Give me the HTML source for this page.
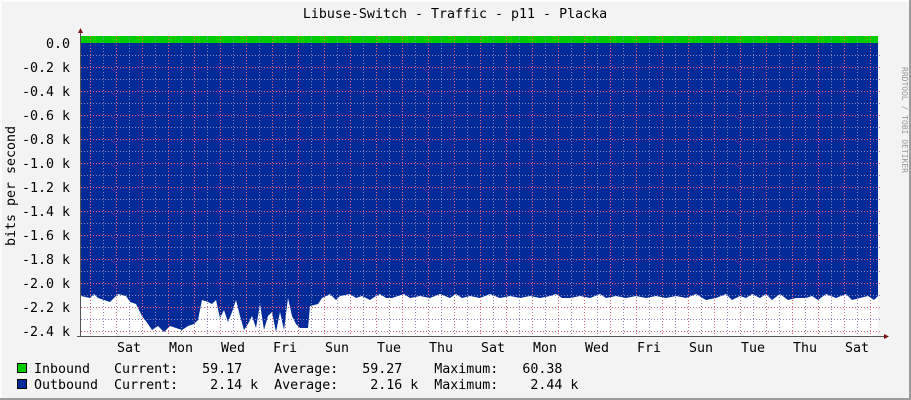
<!DOCTYPE html>
<html><head><meta charset="utf-8"><style>
html,body{margin:0;padding:0;background:#f3f3f3}
svg{display:block}
text{font-family:"DejaVu Sans Mono","Liberation Mono",monospace;font-size:13.3px;fill:#000}
</style></head><body>
<svg width="911" height="400" xmlns="http://www.w3.org/2000/svg">
<rect x="0" y="0" width="911" height="400" fill="#f3f3f3"/>
<rect x="0" y="0" width="911" height="2" fill="#fcfcfc"/>
<rect x="0" y="0" width="2" height="400" fill="#fcfcfc"/>
<rect x="909" y="0" width="2" height="400" fill="#9c9c9c"/>
<rect x="0" y="398" width="911" height="2" fill="#9c9c9c"/>
<rect x="81" y="36" width="797" height="300" fill="#ffffff"/>
<rect x="81" y="36" width="797" height="7" fill="#00cc00"/>
<rect x="81" y="43" width="797" height="250" fill="#002a97"/>
<polygon fill="#002a97" points="81,296 90,298 94,294 98,298 104,300 110,302 114,298 118,294 126,296 130,302 136,304 142,316 148,324 152,330 158,326 164,332 170,326 176,328 182,330 188,326 194,324 198,320 202,300 208,302 212,304 216,300 220,318 224,310 228,322 232,312 236,300 240,316 244,330 248,324 252,316 256,328 260,304 264,330 268,316 272,312 276,332 280,312 284,330 288,298 292,316 296,324 300,328 308,328 310,306 318,304 322,298 330,294 336,300 340,296 350,294 356,298 362,296 370,300 376,296 380,294 386,298 392,298 398,296 404,294 410,298 420,296 430,298 440,294 450,298 456,294 462,298 470,296 480,298 490,294 500,298 510,296 520,298 530,296 540,298 550,296 556,294 562,298 570,298 580,296 590,298 600,294 606,298 616,296 626,298 636,296 646,298 656,296 666,298 676,296 686,298 696,294 706,300 716,298 726,294 732,300 740,296 746,298 752,294 760,298 766,294 772,300 780,294 788,300 796,298 806,298 812,296 818,300 826,294 836,298 846,294 852,300 860,298 868,296 874,300 878,296 878,43 81,43"/>
<g stroke="#d86878" stroke-width="1" stroke-dasharray="1,2">
<line x1="81" y1="67.5" x2="880" y2="67.5"/><line x1="81" y1="91.5" x2="880" y2="91.5"/><line x1="81" y1="115.5" x2="880" y2="115.5"/><line x1="81" y1="139.5" x2="880" y2="139.5"/><line x1="81" y1="163.5" x2="880" y2="163.5"/><line x1="81" y1="187.5" x2="880" y2="187.5"/><line x1="81" y1="211.5" x2="880" y2="211.5"/><line x1="81" y1="235.5" x2="880" y2="235.5"/><line x1="81" y1="259.5" x2="880" y2="259.5"/><line x1="81" y1="283.5" x2="880" y2="283.5"/><line x1="81" y1="307.5" x2="880" y2="307.5"/><line x1="81" y1="331.5" x2="880" y2="331.5"/>
<line x1="90.5" y1="36" x2="90.5" y2="336"/><line x1="116.5" y1="36" x2="116.5" y2="336"/><line x1="142.5" y1="36" x2="142.5" y2="336"/><line x1="168.5" y1="36" x2="168.5" y2="336"/><line x1="194.5" y1="36" x2="194.5" y2="336"/><line x1="220.5" y1="36" x2="220.5" y2="336"/><line x1="246.5" y1="36" x2="246.5" y2="336"/><line x1="272.5" y1="36" x2="272.5" y2="336"/><line x1="298.5" y1="36" x2="298.5" y2="336"/><line x1="324.5" y1="36" x2="324.5" y2="336"/><line x1="350.5" y1="36" x2="350.5" y2="336"/><line x1="376.5" y1="36" x2="376.5" y2="336"/><line x1="402.5" y1="36" x2="402.5" y2="336"/><line x1="428.5" y1="36" x2="428.5" y2="336"/><line x1="454.5" y1="36" x2="454.5" y2="336"/><line x1="480.5" y1="36" x2="480.5" y2="336"/><line x1="506.5" y1="36" x2="506.5" y2="336"/><line x1="532.5" y1="36" x2="532.5" y2="336"/><line x1="558.5" y1="36" x2="558.5" y2="336"/><line x1="584.5" y1="36" x2="584.5" y2="336"/><line x1="610.5" y1="36" x2="610.5" y2="336"/><line x1="636.5" y1="36" x2="636.5" y2="336"/><line x1="662.5" y1="36" x2="662.5" y2="336"/><line x1="688.5" y1="36" x2="688.5" y2="336"/><line x1="714.5" y1="36" x2="714.5" y2="336"/><line x1="740.5" y1="36" x2="740.5" y2="336"/><line x1="766.5" y1="36" x2="766.5" y2="336"/><line x1="792.5" y1="36" x2="792.5" y2="336"/><line x1="818.5" y1="36" x2="818.5" y2="336"/><line x1="844.5" y1="36" x2="844.5" y2="336"/><line x1="870.5" y1="36" x2="870.5" y2="336"/>
</g>
<g stroke="#8888b8" stroke-width="1" stroke-dasharray="1,2">
<line x1="81" y1="55.5" x2="880" y2="55.5"/><line x1="81" y1="79.5" x2="880" y2="79.5"/><line x1="81" y1="103.5" x2="880" y2="103.5"/><line x1="81" y1="127.5" x2="880" y2="127.5"/><line x1="81" y1="151.5" x2="880" y2="151.5"/><line x1="81" y1="175.5" x2="880" y2="175.5"/><line x1="81" y1="199.5" x2="880" y2="199.5"/><line x1="81" y1="223.5" x2="880" y2="223.5"/><line x1="81" y1="247.5" x2="880" y2="247.5"/><line x1="81" y1="271.5" x2="880" y2="271.5"/><line x1="81" y1="295.5" x2="880" y2="295.5"/><line x1="81" y1="319.5" x2="880" y2="319.5"/>
<line x1="103.5" y1="36" x2="103.5" y2="336"/><line x1="129.5" y1="36" x2="129.5" y2="336"/><line x1="155.5" y1="36" x2="155.5" y2="336"/><line x1="181.5" y1="36" x2="181.5" y2="336"/><line x1="207.5" y1="36" x2="207.5" y2="336"/><line x1="233.5" y1="36" x2="233.5" y2="336"/><line x1="259.5" y1="36" x2="259.5" y2="336"/><line x1="285.5" y1="36" x2="285.5" y2="336"/><line x1="311.5" y1="36" x2="311.5" y2="336"/><line x1="337.5" y1="36" x2="337.5" y2="336"/><line x1="363.5" y1="36" x2="363.5" y2="336"/><line x1="389.5" y1="36" x2="389.5" y2="336"/><line x1="415.5" y1="36" x2="415.5" y2="336"/><line x1="441.5" y1="36" x2="441.5" y2="336"/><line x1="467.5" y1="36" x2="467.5" y2="336"/><line x1="493.5" y1="36" x2="493.5" y2="336"/><line x1="519.5" y1="36" x2="519.5" y2="336"/><line x1="545.5" y1="36" x2="545.5" y2="336"/><line x1="571.5" y1="36" x2="571.5" y2="336"/><line x1="597.5" y1="36" x2="597.5" y2="336"/><line x1="623.5" y1="36" x2="623.5" y2="336"/><line x1="649.5" y1="36" x2="649.5" y2="336"/><line x1="675.5" y1="36" x2="675.5" y2="336"/><line x1="701.5" y1="36" x2="701.5" y2="336"/><line x1="727.5" y1="36" x2="727.5" y2="336"/><line x1="753.5" y1="36" x2="753.5" y2="336"/><line x1="779.5" y1="36" x2="779.5" y2="336"/><line x1="805.5" y1="36" x2="805.5" y2="336"/><line x1="831.5" y1="36" x2="831.5" y2="336"/><line x1="857.5" y1="36" x2="857.5" y2="336"/>
</g>
<line x1="80.5" y1="32" x2="80.5" y2="337" stroke="#555" stroke-width="1"/>
<line x1="77" y1="336.5" x2="884" y2="336.5" stroke="#555" stroke-width="1"/>
<polygon points="78,33 83,33 80.5,28" fill="#801010"/>
<polygon points="884,334 884,339 889,336.5" fill="#801010"/>
<text x="455" y="18" text-anchor="middle">Libuse-Switch - Traffic - p11 - Placka</text>
<g text-anchor="end">
<text x="70" y="48">0.0</text><text x="70" y="72">-0.2 k</text><text x="70" y="96">-0.4 k</text><text x="70" y="120">-0.6 k</text><text x="70" y="144">-0.8 k</text><text x="70" y="168">-1.0 k</text><text x="70" y="192">-1.2 k</text><text x="70" y="216">-1.4 k</text><text x="70" y="240">-1.6 k</text><text x="70" y="264">-1.8 k</text><text x="70" y="288">-2.0 k</text><text x="70" y="312">-2.2 k</text><text x="70" y="336">-2.4 k</text>
</g>
<text transform="translate(15,186) rotate(-90)" text-anchor="middle">bits per second</text>
<text transform="translate(902,120) rotate(90)" text-anchor="middle" style="font-size:8px;fill:#999">RRDTOOL / TOBI OETIKER</text>
<g text-anchor="middle">
<text x="129" y="352">Sat</text><text x="181" y="352">Mon</text><text x="233" y="352">Wed</text><text x="285" y="352">Fri</text><text x="337" y="352">Sun</text><text x="389" y="352">Tue</text><text x="441" y="352">Thu</text><text x="493" y="352">Sat</text><text x="545" y="352">Mon</text><text x="597" y="352">Wed</text><text x="649" y="352">Fri</text><text x="701" y="352">Sun</text><text x="753" y="352">Tue</text><text x="805" y="352">Thu</text><text x="857" y="352">Sat</text>
</g>
<rect x="17.5" y="363.5" width="9" height="9" fill="#00cc00" stroke="#000"/>
<rect x="17.5" y="379.5" width="9" height="9" fill="#002a97" stroke="#000"/>
<text x="34" y="373" xml:space="preserve">Inbound   Current:   59.17    Average:   59.27    Maximum:   60.38</text>
<text x="34" y="389" xml:space="preserve">Outbound  Current:    2.14 k  Average:    2.16 k  Maximum:    2.44 k</text>
</svg>
</body></html>
